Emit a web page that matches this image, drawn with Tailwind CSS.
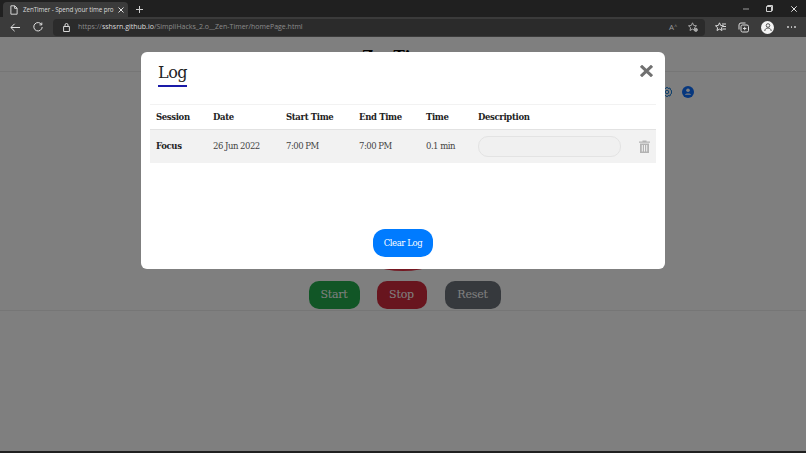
<!DOCTYPE html>
<html lang="en">
<head>
    <meta charset="UTF-8">
    <title>ZenTimer</title>
    <script src="https://cdn.jsdelivr.net/npm/@tailwindcss/browser@4"></script>
</head>
<body class="w-[806px] h-[453px] overflow-hidden flex flex-col bg-[#202020] font-['DejaVu_Serif',serif]">

    <!-- browser tabs -->
    <div class="h-[17px] shrink-0 flex items-end bg-[#202020] font-['Open_Sans',sans-serif]">
        <div class="ml-[3px] w-[125px] h-[15px] bg-[#3b3b3b] rounded-t flex items-center pl-[7px] pr-[4px] text-[6.3px] text-[#d8d8d8]">
            <svg class="w-[8px] h-[10px] mr-[5px] shrink-0" viewBox="0 0 9 11" fill="none" stroke="#e6e6e6" stroke-width="1"><path d="M1 .8h4.400L8 3.400v6.800H1zM5.200 1v2.600H8"/></svg>
            <span class="whitespace-nowrap tracking-[-0.1px]">ZenTimer - Spend your time pro</span>
            <svg class="w-[6px] h-[6px] ml-auto shrink-0" viewBox="0 0 6 6" stroke="#e0e0e0" stroke-width="1"><path d="M.5.5l5 5M5.500.5l-5 5"/></svg>
        </div>
        <svg class="w-[7px] h-[7px] ml-[8px] mb-[4px]" viewBox="0 0 7 7" stroke="#d0d0d0" stroke-width="1"><path d="M3.500 0v7M0 3.500h7"/></svg>
        <div class="ml-auto flex items-center pr-[9px] mb-[5px]">
            <svg class="w-[6px] h-[6px]" viewBox="0 0 6 6" stroke="#9a9a9a"><path d="M0 3h6"/></svg>
            <svg class="w-[7px] h-[7px] ml-[17px]" viewBox="0 0 7 7" fill="none" stroke="#cfcfcf"><path d="M.5 1.500h5v5h-5zM1.500 1.500V.5h5v5h-1"/></svg>
            <svg class="w-[6px] h-[6px] ml-[18px]" viewBox="0 0 6 6" stroke="#e0e0e0"><path d="M.3.3l5.400 5.400M5.700.3L.3 5.700"/></svg>
        </div>
    </div>

    <!-- browser toolbar -->
    <div class="h-[20px] shrink-0 bg-[#3b3b3b] flex items-center font-['Open_Sans',sans-serif]">
        <svg class="w-[10px] h-[9px] ml-[10px]" viewBox="0 0 10 9" fill="none" stroke="#e4e4e4"><path d="M10 4.500H1M4.600.8L.9 4.500l3.700 3.700"/></svg>
        <svg class="w-[10px] h-[10px] ml-[13px]" viewBox="0 0 10 10" fill="none" stroke="#e0e0e0"><path d="M8.600 2.600A4.200 4.200 0 1 0 9.200 5M8.800.6v2.300H6.500"/></svg>
        <div class="ml-[10px] w-[652px] h-[17px] bg-[#2b2b2b] rounded-sm flex items-center pl-[10px] text-[7px] text-[#8c8c8c]">
            <svg class="w-[7px] h-[9px] mr-[8px]" viewBox="0 0 7 9" fill="none" stroke="#d8d8d8"><path d="M.6 3.500h5.800v5H.6zM2 3.500V2a1.500 1.500 0 0 1 3 0v1.500"/></svg>
            <span>https://<span class="text-[#dcdcdc]">sshsrn.github.io</span>/SimpliHacks_2.o__Zen-Timer/homePage.html</span>
            <span class="ml-auto mr-[11px] text-[8px] text-[#9a9a9a]">A<sup class="text-[5px]">^</sup></span>
            <svg class="w-[10px] h-[10px] mr-[7px]" viewBox="0 0 10 10" fill="none" stroke="#a8a8a8"><path d="M4.500.8l1.200 2.700 2.800.3-2.100 1.900.6 2.800-2.500-1.400L2 8.500l.6-2.800L.5 3.800l2.800-.3z"/><circle cx="7.800" cy="7.800" r="1.600" fill="#a8a8a8"/></svg>
        </div>
        <svg class="w-[11px] h-[10px] ml-[10px]" viewBox="0 0 11 10" fill="none" stroke="#dcdcdc"><path d="M4.500.8l1.200 2.700 2.800.3-2.100 1.900.6 2.800-2.500-1.400L2 8.500l.6-2.800L.5 3.800l2.800-.3zM7 2h4M8 4.500h3M7.500 7H11"/></svg>
        <svg class="w-[11px] h-[11px] ml-[12px]" viewBox="0 0 11 11" fill="none" stroke="#dcdcdc"><rect x="3" y="3" width="7.500" height="7" rx="1.500"/><path d="M1 7.500V3a2 2 0 0 1 2-2h4.500M6.700 4.800v3.400M5 6.500h3.400"/></svg>
        <div class="ml-[12px] w-[13px] h-[13px] rounded-full bg-[#f4f4f4] flex items-center justify-center">
            <svg class="w-[8px] h-[8px]" viewBox="0 0 8 8" fill="none" stroke="#555"><circle cx="4" cy="2.500" r="1.800"/><path d="M.8 8c0-4 6.400-4 6.400 0"/></svg>
        </div>
        <div class="ml-[13px] flex gap-[2px]">
            <span class="w-[1.500px] h-[1.500px] bg-[#cfcfcf] rounded-full"></span>
            <span class="w-[1.500px] h-[1.500px] bg-[#cfcfcf] rounded-full"></span>
            <span class="w-[1.500px] h-[1.500px] bg-[#cfcfcf] rounded-full"></span>
        </div>
    </div>

    <!-- page behind the dialog -->
    <div class="relative h-[414px] shrink-0 bg-white overflow-hidden">
        <div class="h-[35px] border-b border-[#ececec] flex justify-center pt-[8px] text-[15px] font-bold text-black">ZenTimer</div>
        <div class="h-[34px] flex justify-end items-center gap-[9px] pr-[112px] pt-[6px]">
            <svg class="w-[12px] h-[12px]" viewBox="0 0 24 24" fill="none" stroke="#1c7ed6" stroke-width="2"><circle cx="12" cy="12" r="3.500"/><path d="M12 2l2 3 4-1 1 4 3 2-2 2 2 2-3 2-1 4-4-1-2 3-2-3-4 1-1-4-3-2 2-2-2-2 3-2 1-4 4 1z"/></svg>
            <svg class="w-[12px] h-[12px]" viewBox="0 0 12 12"><circle cx="6" cy="6" r="6" fill="#0d6efd"/><circle cx="6" cy="4.300" r="1.800" fill="#fff"/><path d="M2.800 8.800c.8-1.800 5.600-1.800 6.400 0z" fill="#fff"/></svg>
        </div>
        <div class="h-[165px] overflow-hidden flex items-end justify-center">
            <div class="w-[180px] h-[180px] shrink-0 rounded-full border-[5px] border-[#e83044]"></div>
        </div>
        <div class="mt-[10px] pl-[3px] flex justify-center text-[11px] tracking-[-0.2px]">
            <button class="w-[51px] h-[28px] rounded-[10px] bg-[#22ad4d] text-white">Start</button>
            <button class="ml-[17px] w-[50px] h-[28px] rounded-[10px] bg-[#d12b3d] text-white">Stop</button>
            <button class="ml-[18px] w-[56px] h-[28px] rounded-[10px] bg-[#6c727a] text-white">Reset</button>
        </div>
        <div class="mt-[1px] border-b border-[#ececec]"></div>

        <!-- backdrop -->
        <div class="absolute inset-0 bg-black/50"></div>

        <!-- log dialog -->
        <div class="absolute left-[141px] top-[15px] w-[524px] h-[217px] bg-white rounded-md flex flex-col">
            <div class="h-[52px] shrink-0 relative pl-[17px] pt-[9px]">
                <h2 class="inline-block text-[16px] tracking-[-0.5px] leading-[24px] text-[#222] border-b-2 border-[#1a1aa8]">Log</h2>
                <svg class="absolute left-[499px] top-[13px] w-[13px] h-[12px]" viewBox="0 0 13 12" stroke="#707070" stroke-width="3"><path d="M1 .8l11 10.400M12 .8L1 11.200"/></svg>
            </div>
            <div class="mx-[9px] border-t border-[#f2f2f2]">
                <div class="h-[25px] grid grid-cols-[57px_73px_73px_67px_52px_1fr] pl-[6px] items-center text-[8.5px] tracking-[-0.35px] font-bold text-[#222] border-b border-[#e2e2e2]">
                    <div>Session</div>
                    <div>Date</div>
                    <div>Start Time</div>
                    <div>End Time</div>
                    <div>Time</div>
                    <div>Description</div>
                </div>
                <div class="h-[33px] grid grid-cols-[57px_73px_73px_67px_52px_143px_1fr] pl-[6px] items-center text-[8.5px] tracking-[-0.5px] text-[#444] bg-[#f2f2f2]">
                    <div class="font-bold tracking-[-0.35px] text-[#222]">Focus</div>
                    <div>26 Jun 2022</div>
                    <div>7:00 PM</div>
                    <div>7:00 PM</div>
                    <div>0.1 min</div>
                    <input type="text" class="h-[21px] w-[143px] rounded-[10px] border border-[#e3e3e3] bg-[#f0f0f0]">
                    <svg class="justify-self-end mr-[6px] w-[11px] h-[13px]" viewBox="0 0 11 13" fill="#b3b3b3"><path d="M0 1.500h3.500V.5h4v1H11v1.300H0z"/><path fill-rule="evenodd" d="M1 3.500h9V13H1zM2.800 5v6.500h1V5zM5 5v6.500h1V5zM7.200 5v6.500h1V5z"/></svg>
                </div>
            </div>
            <div class="mt-auto mb-[12px] flex justify-center">
                <button class="w-[60px] h-[28px] rounded-[12px] bg-[#007bff] text-white text-[8.5px] tracking-[-0.4px]">Clear Log</button>
            </div>
        </div>
    </div>
</body>
</html>
